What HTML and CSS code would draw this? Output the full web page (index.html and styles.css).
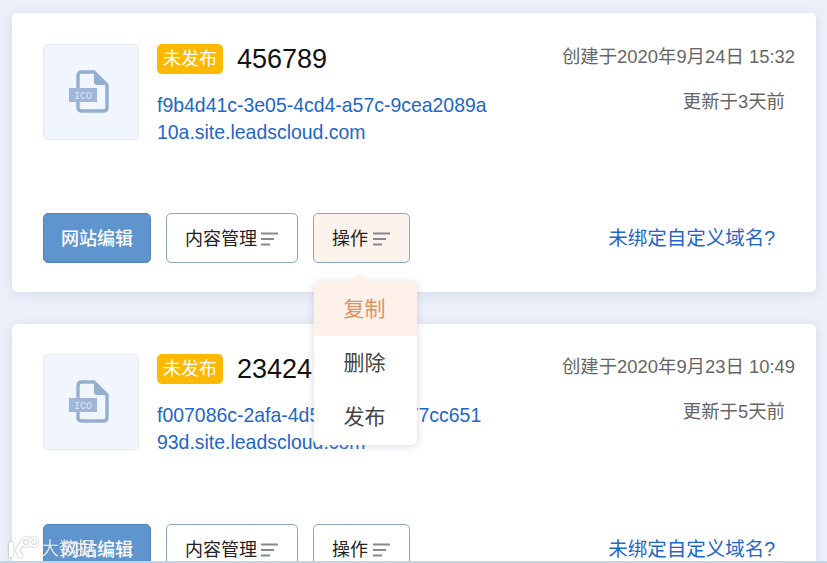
FILE: index.html
```html
<!DOCTYPE html>
<html lang="zh-CN">
<head>
<meta charset="utf-8">
<title>站点列表</title>
<link rel="stylesheet" href="styles.css">
</head>
<body>
<svg class="defs" width="0" height="0" aria-hidden="true">
  <symbol id="bars" viewBox="0 0 18 14">
    <path d="M0 1.5H17M0 7H13M0 12.5H9" fill="none" stroke="#85888f" stroke-width="2"/>
  </symbol>
</svg>
<main class="list">
  <article class="card">
    <div class="top">
      <div class="thumb">
        <svg class="file" width="42" height="44" viewBox="0 0 42 44">
          <path d="M10 18V5.500Q10 2 13.500 2H26L39 15V37.500Q39 41 35.500 41H13.500Q10 41 10 37.500V32" fill="#f1f5fd" stroke="#94aed0" stroke-width="3.400"/>
          <path d="M26 2L39 15H29Q26 15 26 12Z" fill="#94aed0"/>
          <rect x="1" y="18" width="28" height="14" fill="#a0b6d8"/>
          <text x="15" y="29" class="icon-text">ICO</text>
        </svg>
      </div>
      <div class="info">
        <div class="title"><span class="badge">未发布</span><span class="name">456789</span></div>
        <a class="url">f9b4d41c-3e05-4cd4-a57c-9cea2089a10a.site.leadscloud.com</a>
      </div>
      <div class="dates">
        <div class="created">创建于2020年9月24日 15:32</div>
        <div class="updated">更新于3天前</div>
      </div>
    </div>
    <div class="actions">
      <button class="btn primary">网站编辑</button>
      <button class="btn">内容管理<svg class="bars" width="18" height="14"><use href="#bars"/></svg></button>
      <div class="menu-wrap">
        <button class="btn op active">操作<svg class="bars" width="18" height="14"><use href="#bars"/></svg></button>
        <ul class="menu">
          <li class="menu-item hover">复制</li>
          <li class="menu-item">删除</li>
          <li class="menu-item">发布</li>
        </ul>
      </div>
      <a class="domain">未绑定自定义域名?</a>
    </div>
  </article>
  <article class="card second">
    <div class="top">
      <div class="thumb">
        <svg class="file" width="42" height="44" viewBox="0 0 42 44">
          <path d="M10 18V5.500Q10 2 13.500 2H26L39 15V37.500Q39 41 35.500 41H13.500Q10 41 10 37.500V32" fill="#f1f5fd" stroke="#94aed0" stroke-width="3.400"/>
          <path d="M26 2L39 15H29Q26 15 26 12Z" fill="#94aed0"/>
          <rect x="1" y="18" width="28" height="14" fill="#a0b6d8"/>
          <text x="15" y="29" class="icon-text">ICO</text>
        </svg>
      </div>
      <div class="info">
        <div class="title"><span class="badge">未发布</span><span class="name">23424</span></div>
        <a class="url">f007086c-2afa-4d50-a1b2-c477cc65193d.site.leadscloud.com</a>
      </div>
      <div class="dates">
        <div class="created">创建于2020年9月23日 10:49</div>
        <div class="updated">更新于5天前</div>
      </div>
    </div>
    <div class="actions">
      <button class="btn primary">网站编辑</button>
      <button class="btn">内容管理<svg class="bars" width="18" height="14"><use href="#bars"/></svg></button>
      <button class="btn op">操作<svg class="bars" width="18" height="14"><use href="#bars"/></svg></button>
      <a class="domain">未绑定自定义域名?</a>
    </div>
  </article>
</main>
<div class="watermark">
  <svg width="30" height="22" viewBox="0 0 30 22"><path d="M3 6V21M14 8Q6 14 14 21" fill="none" stroke="#fff" stroke-width="4"/><circle cx="18" cy="6" r="4" fill="none" stroke="#fff" stroke-width="2"/><circle cx="26" cy="6" r="4" fill="none" stroke="#fff" stroke-width="2"/></svg>
  <span>大数据</span>
</div>
<div class="bottom-line"></div>
</body>
</html>
```
FILE: styles.css
```css
* { box-sizing: border-box; }
html, body { margin: 0; height: 563px; overflow: hidden; }
body {
  position: relative;
  background: #edf0f9;
  font-family: "Liberation Sans", "Noto Sans CJK SC", sans-serif;
}
.defs { position: absolute; }
.list {
  display: flex;
  flex-direction: column;
  gap: 32px;
  padding: 13px 11px 0 12px;
}
.card {
  flex: none;
  height: 279px;
  padding: 31px 21px 29px 31px;
  background: #fff;
  border-radius: 5px;
  box-shadow: 0 2px 12px rgba(165, 175, 210, .35);
  display: flex;
  flex-direction: column;
  justify-content: space-between;
}
.top { display: flex; align-items: flex-start; }
.second .top { margin-top: -1px; }
.thumb {
  flex: none;
  width: 96px;
  height: 96px;
  display: flex;
  align-items: center;
  justify-content: center;
  background: #f1f5fd;
  border: 1px solid #e6e9ef;
  border-radius: 5px;
}
.file { margin-left: -5px; }
.icon-text { font: 10px "Liberation Mono", monospace; fill: #dfe7f3; text-anchor: middle; }
.info { width: 332px; margin-left: 18px; }
.title { display: flex; align-items: center; height: 30px; }
.badge {
  width: 66px;
  height: 30px;
  line-height: 30px;
  text-align: center;
  font-size: 18px;
  color: #fff;
  background: #fdb900;
  border-radius: 5px;
}
.name { margin-left: 14px; font-size: 27px; color: #111; }
.url {
  display: block;
  margin-top: 18px;
  font-size: 19.45px;
  line-height: 27px;
  color: #1e66c7;
  word-break: break-all;
}
.dates {
  margin-left: auto;
  text-align: right;
  color: #666;
  font-size: 18.4px;
  padding-top: 1px;
}
.created { line-height: 24px; }
.updated { margin-top: 21px; margin-right: 10px; line-height: 24px; }
.actions { display: flex; align-items: center; gap: 15px; }
.btn {
  height: 50px;
  padding: 0 18px 2px;
  display: flex;
  align-items: center;
  gap: 4px;
  white-space: nowrap;
  font: 18px "Liberation Sans", "Noto Sans CJK SC", sans-serif;
  color: #222;
  background: #fff;
  border: 1px solid #8aa5c4;
  border-radius: 5px;
}
.btn.op { gap: 5px; }
.btn.primary {
  width: 108px;
  padding: 0 0 2px;
  justify-content: center;
  font-weight: 500;
  color: #fff;
  background: #5f95cf;
  border-color: #5483b8;
}
.btn.active { background: #fdf3ed; }
.bars { flex: none; margin-top: 3px; }
.menu-wrap { position: relative; }
.menu {
  position: absolute;
  top: 69px;
  left: 1px;
  z-index: 2;
  width: 103px;
  margin: 0;
  padding: 0;
  list-style: none;
  background: #fff;
  border-radius: 5px;
  box-shadow: 0 1px 8px rgba(150, 160, 190, .4);
}
.menu::before {
  content: "";
  position: absolute;
  top: -6px;
  left: 40px;
  width: 12px;
  height: 12px;
  background: #fdf1ea;
  transform: rotate(45deg);
}
.menu-item {
  position: relative;
  height: 54px;
  padding-right: 2px;
  line-height: 54px;
  text-align: center;
  font-size: 21px;
  color: #444;
}
.menu-item:last-child { height: 55px; }
.menu-item.hover { color: #e2925f; background: #fdf1ea; border-radius: 5px 5px 0 0; }
.domain { margin-left: auto; margin-right: 20px; padding-bottom: 3px; font-size: 19.5px; color: #1e66c7; }
.watermark {
  position: absolute;
  left: 8px;
  top: 534px;
  z-index: 3;
  display: flex;
  align-items: center;
  gap: 3px;
  font-size: 18px;
  color: rgba(255, 255, 255, .8);
  filter: drop-shadow(0 0 1px rgba(90, 100, 120, .55));
}
.bottom-line { position: absolute; left: 0; right: 0; bottom: 0; height: 2px; background: #bcd3ea; z-index: 4; }
```
